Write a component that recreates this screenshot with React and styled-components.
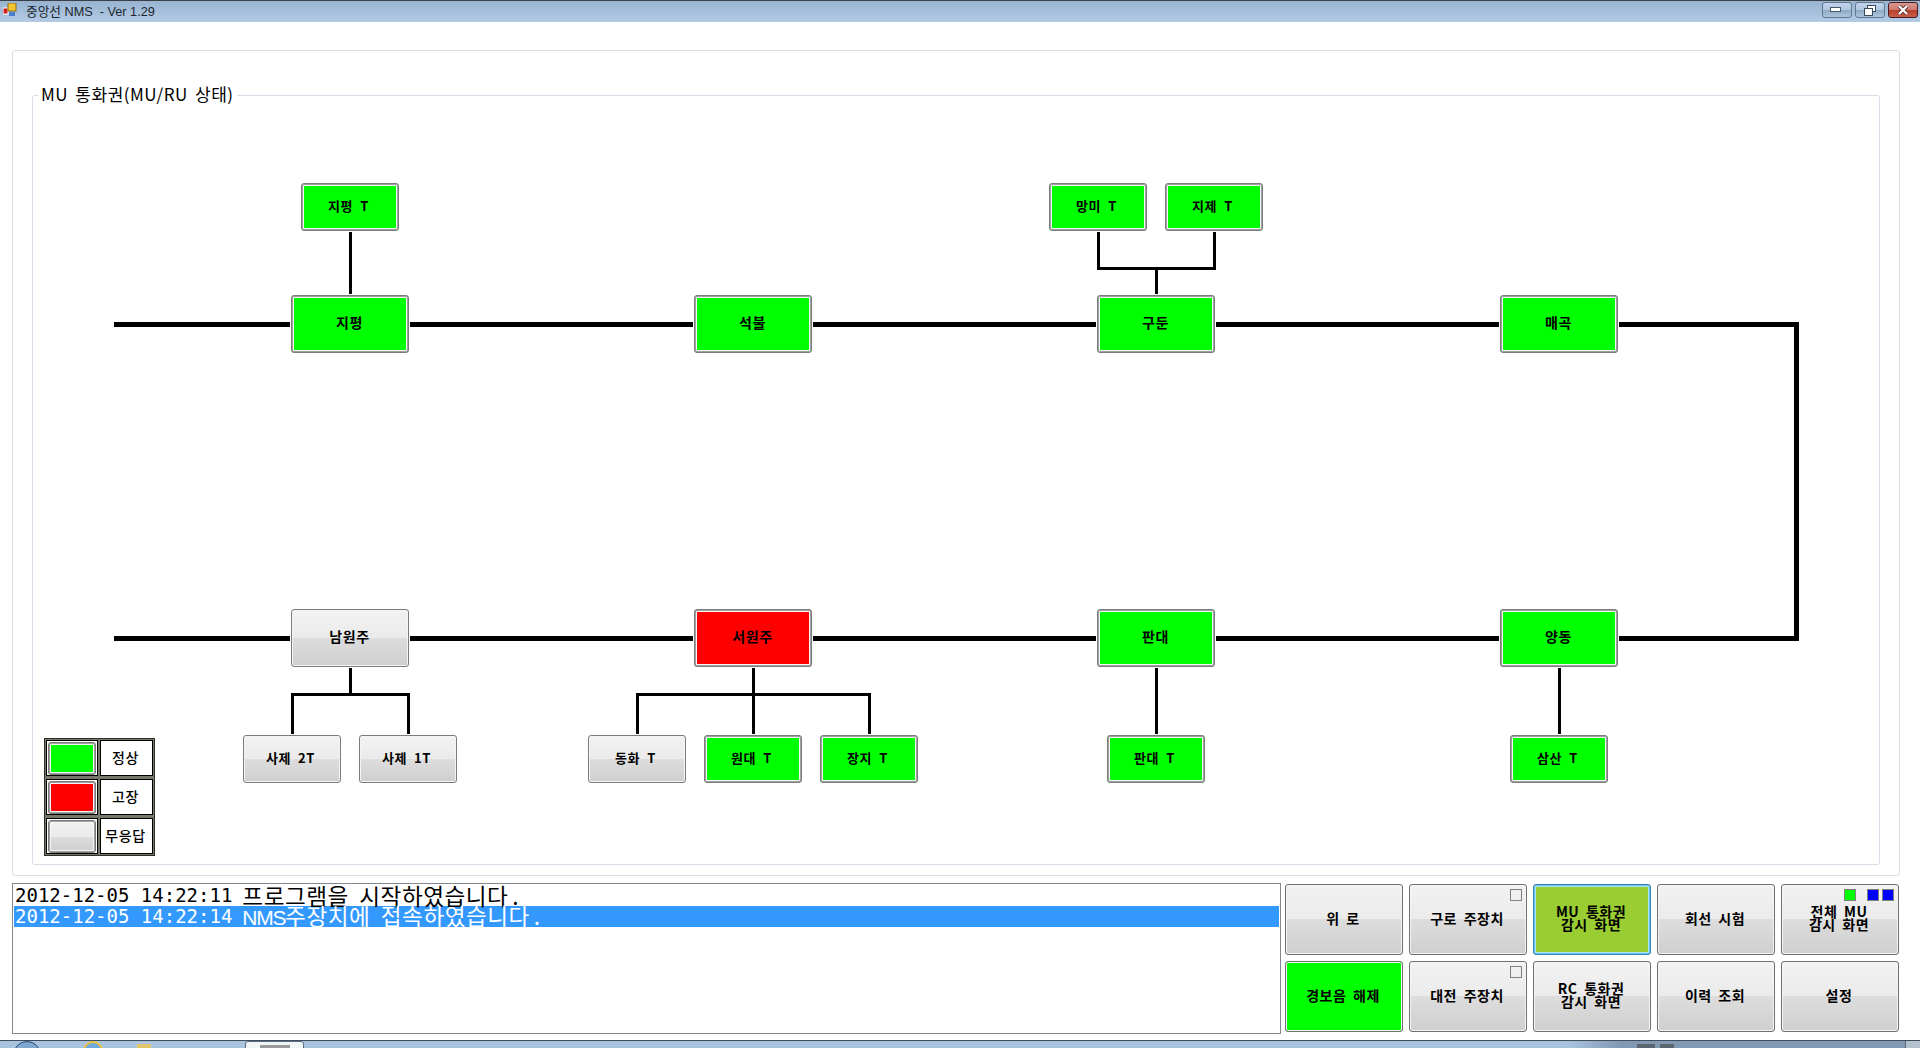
import React from 'react'
import styled, { createGlobalStyle, css } from 'styled-components'

const cjk = '"Noto Sans CJK KR", sans-serif'
const ORIGIN = { x: 33, y: 96 }

const GlobalStyle = createGlobalStyle`
  html, body {
    margin: 0;
    padding: 0;
    background: #fff;
    font-family: ${cjk};
  }
`

const Page = styled.div`
  width: 1920px;
  height: 1048px;
  overflow: hidden;
  display: flex;
  flex-direction: column;
  background: #fff;
`

/* title bar */
const TitleBar = styled.div`
  flex: none;
  height: 22px;
  box-sizing: border-box;
  display: flex;
  align-items: center;
  padding: 0 2px 3px 3px;
  border-top: 1px solid #3b4046;
  background: linear-gradient(#98b4d1, #b3cae4);
`

const TitleText = styled.span`
  margin-left: 9px;
  font: 12.7px "Liberation Sans", ${cjk};
  color: #1c2630;
  white-space: pre;
`

const WindowButtons = styled.div`
  margin-left: auto;
  display: flex;
  gap: 3px;
  align-self: flex-start;
  margin-top: 1px;
`

const WindowButton = styled.div`
  width: 30px;
  height: 16px;
  box-sizing: border-box;
  display: flex;
  align-items: center;
  justify-content: center;
  border: 1px solid #5f7590;
  border-radius: 3px;
  background: linear-gradient(#c0d3e8 0, #b0c7df 50%, #8fa9c4 52%, #aec6df 100%);

  ${props => props.$close && css`
    border-color: #4a1a28;
    background: linear-gradient(#d9988c 0, #cc7a6c 50%, #b8402c 52%, #c9604c 100%);
  `}
`

/* frames */
const OuterPanel = styled.div`
  flex: none;
  height: 826px;
  box-sizing: border-box;
  margin: 28px 20px 0 12px;
  padding: 44px 19px 10px 19px;
  border: 1px solid #d6dfe8;
  border-radius: 3px;
`

const GroupBox = styled.div`
  position: relative;
  box-sizing: border-box;
  height: 100%;
  border: 1px solid #d6dfe8;
  border-radius: 3px;
`

const GroupTitle = styled.span`
  position: absolute;
  left: 5px;
  top: -14px;
  padding: 0 3px;
  background: #fff;
  font: 400 17px/24px ${cjk};
  letter-spacing: 0.5px;
  word-spacing: 3px;
  color: #000;
  white-space: nowrap;
`

const Canvas = styled.div`
  position: relative;
  width: 100%;
  height: 100%;
`

const WireLayer = styled.svg`
  position: absolute;
  left: 0;
  top: 0;
  width: 100%;
  height: 100%;
  fill: none;
  stroke: #000;
`

/* status faces */
const fills = {
  ok: '#00ff00',
  fault: '#ff0000',
  none: 'linear-gradient(#f2f2f2 0, #ebebeb 50%, #dddddd 50%, #cfcfcf 100%)'
}

const Node = styled.div`
  position: absolute;
  left: ${props => props.$x - ORIGIN.x}px;
  top: ${props => props.$y - ORIGIN.y}px;
  width: ${props => (props.$small ? 98 : 118)}px;
  height: ${props => (props.$small ? 48 : 58)}px;
  box-sizing: border-box;
  display: flex;
  align-items: center;
  justify-content: center;
  padding: 0 ${props => (props.$small ? 3 : 1)}px ${props => (props.$small ? 3 : 5)}px 0;
  border: 1px solid #7c7c7c;
  border-radius: 3px;
  background: ${props => fills[props.$status]};
  box-shadow: inset 0 0 0 1px #a0a0a0, inset 0 0 0 2px #f5f5f5;
  font: 700 ${props => (props.$small ? 13 : 14)}px ${cjk};
  letter-spacing: 0.6px;
  word-spacing: 3.5px;
  color: #000;
  ${props => props.$status === 'none' && css`
    box-shadow: inset 0 0 0 1px #f4f4f4;
  `}
`

/* legend */
const Legend = styled.div`
  position: absolute;
  left: ${44 - ORIGIN.x}px;
  top: ${738 - ORIGIN.y}px;
  width: 111px;
  height: 118px;
  box-sizing: border-box;
  display: grid;
  grid-template-columns: 52px 53px;
  grid-auto-rows: 36px;
  column-gap: 2px;
  row-gap: 3px;
  padding: 2px;
  background: #77776a;
  outline: 1px solid #2e2e28;
  outline-offset: -1px;
`

const LegendCell = styled.div`
  box-sizing: border-box;
  display: flex;
  align-items: center;
  justify-content: center;
  border: 1px solid #000;
  background: #fff;
  font: 500 14px ${cjk};
  letter-spacing: 0.6px;
  padding: 0 2px 3px 0;
`

const SwatchCell = styled(LegendCell)`
  padding: 0;
`

const Swatch = styled.div`
  width: 48px;
  height: 33px;
  box-sizing: border-box;
  border: 1px solid #7c7c7c;
  border-radius: 3px;
  background: ${props => fills[props.$status]};
  box-shadow: inset 0 0 0 1px #a0a0a0, inset 0 0 0 2px #f5f5f5;
`

/* bottom */
const BottomRow = styled.div`
  flex: none;
  height: 151px;
  margin: 7px 21px 0 12px;
  display: flex;
  gap: 4px;
`

const LogBox = styled.div`
  width: 1269px;
  box-sizing: border-box;
  padding: 1px;
  border: 1px solid #828790;
`

const LogRow = styled.div`
  height: 21px;
  display: flex;
  align-items: center;
  padding-left: 1px;
  white-space: pre;
  color: #000;
  ${props => props.$selected && css`
    background: #3399ff;
    color: #fff;
  `}
`

const Stamp = styled.span`
  font: 400 19px/21px "DejaVu Sans Mono", monospace;
`

const Message = styled.span`
  font: 400 22.6px/21px ${cjk};
  margin-left: 10px;
  letter-spacing: 0.5px;
  word-spacing: 5px;
`

const Latin = styled.span`
  font: 400 21px/21px "Liberation Sans", sans-serif;
  letter-spacing: -1.3px;
`

const Period = styled.span`
  margin-left: 4px;
`

const ButtonGrid = styled.div`
  margin-top: 1px;
  display: grid;
  grid-template-columns: repeat(5, 118px);
  grid-template-rows: repeat(2, 71px);
  gap: 6px;
`

const CommandButton = styled.button`
  position: relative;
  margin: 0;
  padding: 0 2px 3px 0;
  box-sizing: border-box;
  border: 1px solid #707070;
  border-radius: 3px;
  background: ${props => (props.$fill ? props.$fill : fills.none)};
  box-shadow: inset 0 0 0 1px #f4f4f4;
  font: 700 14px/13px ${cjk};
  letter-spacing: 0.5px;
  word-spacing: 3px;
  color: #000;
  white-space: pre-line;

  ${props => props.$focused && css`
    border-color: #3c7fb1;
    box-shadow: inset 0 0 0 1px #62c8ef, inset 0 0 0 2px #a7e2f9;
  `}
`

const Lamps = styled.div`
  position: absolute;
  top: 4px;
  right: 4px;
  display: flex;
`

const Lamp = styled.span`
  width: 12px;
  height: 12px;
  box-sizing: border-box;
  margin-left: ${props => props.$gap || 0}px;
  border: 1px solid #808080;
  background: ${props => props.$color || 'transparent'};
`

/* taskbar */
const TaskBar = styled.div`
  flex: none;
  height: 8px;
  box-sizing: border-box;
  margin-top: 6px;
  display: flex;
  overflow: hidden;
  border-top: 1px solid #3f4d5c;
  background: linear-gradient(90deg, #a9c3df 0, #a9c3df 1568px, #8299b4 1620px, #8299b4 100%);
`

const StartOrb = styled.div`
  flex: none;
  width: 28px;
  height: 28px;
  box-sizing: border-box;
  margin-left: 13px;
  border: 1px solid #274b74;
  border-radius: 50%;
  background: #7fa7cf;
`

const IeMark = styled.div`
  flex: none;
  width: 20px;
  height: 20px;
  box-sizing: border-box;
  margin-left: 42px;
  border: 2px solid #e8c33a;
  border-radius: 50%;
  background: #6fa8dc;
`

const FolderMark = styled.div`
  flex: none;
  width: 14px;
  height: 12px;
  margin: 3px 0 0 34px;
  background: #e2c46a;
`

const ActiveTask = styled.div`
  flex: none;
  width: 59px;
  height: 12px;
  box-sizing: border-box;
  margin-left: 94px;
  display: flex;
  justify-content: center;
  padding-top: 3px;
  border: 1px solid #5a6c80;
  border-radius: 3px 3px 0 0;
  background: #f2f5f8;
`

const TaskThumb = styled.div`
  width: 30px;
  height: 8px;
  background: #9a9a9a;
`

const TrayMarks = styled.div`
  flex: none;
  margin-left: 1333px;
  display: flex;
  gap: 5px;
  padding-top: 3px;
`

const TrayMark = styled.div`
  width: ${props => props.$width}px;
  height: 8px;
  background: #5c6670;
`

const ShowDesktop = styled.div`
  flex: none;
  width: 14px;
  margin-left: auto;
  background: #b4c2d0;
  border-left: 1px solid #5c6670;
`

const AppIcon = () => (
  <svg width="14" height="14" viewBox="0 0 14 14">
    <rect x="0" y="5" width="5" height="6" fill="#d02020" stroke="#fff" />
    <rect x="5" y="0" width="8" height="8" fill="#f4c430" stroke="#8a6d10" />
    <rect x="6" y="9" width="6" height="4" fill="#4a7fd0" />
  </svg>
)

const wires = {
  main: [
    'M114 324.5H290', 'M410 324.5H693', 'M813 324.5H1096', 'M1216 324.5H1499',
    'M1619 324.5H1796.5V638.5H1619',
    'M114 638.5H290', 'M410 638.5H693', 'M813 638.5H1096', 'M1216 638.5H1499'
  ],
  branch: [
    'M350.5 232V294',
    'M1098.5 232V268.5H1214.5V232', 'M1156.5 268V294',
    'M292.5 734V694.5H408.5V734', 'M350.5 668V694',
    'M637.5 734V694.5H869.5V734', 'M753.5 668V734',
    'M1156.5 668V734',
    'M1559.5 668V734'
  ]
}

const stations = [
  { name: '지평', x: 291, y: 295, status: 'ok' },
  { name: '석불', x: 694, y: 295, status: 'ok' },
  { name: '구둔', x: 1097, y: 295, status: 'ok' },
  { name: '매곡', x: 1500, y: 295, status: 'ok' },
  { name: '남원주', x: 291, y: 609, status: 'none' },
  { name: '서원주', x: 694, y: 609, status: 'fault' },
  { name: '판대', x: 1097, y: 609, status: 'ok' },
  { name: '양동', x: 1500, y: 609, status: 'ok' }
]

const tunnels = [
  { name: '지평 T', x: 301, y: 183, status: 'ok' },
  { name: '망미 T', x: 1049, y: 183, status: 'ok' },
  { name: '지제 T', x: 1165, y: 183, status: 'ok' },
  { name: '사제 2T', x: 243, y: 735, status: 'none' },
  { name: '사제 1T', x: 359, y: 735, status: 'none' },
  { name: '동화 T', x: 588, y: 735, status: 'none' },
  { name: '원대 T', x: 704, y: 735, status: 'ok' },
  { name: '장지 T', x: 820, y: 735, status: 'ok' },
  { name: '판대 T', x: 1107, y: 735, status: 'ok' },
  { name: '삼산 T', x: 1510, y: 735, status: 'ok' }
]

const legend = [
  { label: '정상', status: 'ok' },
  { label: '고장', status: 'fault' },
  { label: '무응답', status: 'none' }
]

const App = () => (
  <Page>
    <GlobalStyle />
    <TitleBar>
      <AppIcon />
      <TitleText>중앙선 NMS  - Ver 1.29</TitleText>
      <WindowButtons>
        <WindowButton>
          <svg width="14" height="6" viewBox="0 0 14 6">
            <rect x="0.5" y="0.5" width="10" height="4" fill="#fff" stroke="#44586e" />
          </svg>
        </WindowButton>
        <WindowButton>
          <svg width="12" height="11" viewBox="0 0 12 11" fill="#fff" stroke="#3a4c60">
            <rect x="3.5" y="0.5" width="8" height="6" />
            <rect x="0.5" y="3.5" width="8" height="7" />
          </svg>
        </WindowButton>
        <WindowButton $close>
          <svg width="12" height="10" viewBox="0 0 12 10">
            <path d="M2 1L10 9M10 1L2 9" stroke="#5a2a2a" strokeWidth="4" />
            <path d="M2 1L10 9M10 1L2 9" stroke="#fff" strokeWidth="2.4" />
          </svg>
        </WindowButton>
      </WindowButtons>
    </TitleBar>

    <OuterPanel>
      <GroupBox>
        <GroupTitle>MU 통화권(MU/RU 상태)</GroupTitle>
        <Canvas>
          <WireLayer viewBox={`${ORIGIN.x} ${ORIGIN.y} 1846 768`} shapeRendering="crispEdges">
            {wires.main.map(d => <path key={d} d={d} strokeWidth="5" />)}
            {wires.branch.map(d => <path key={d} d={d} strokeWidth="3" />)}
          </WireLayer>
          {stations.map(s => <Node key={s.name} $x={s.x} $y={s.y} $status={s.status}>{s.name}</Node>)}
          {tunnels.map(t => <Node key={t.name} $small $x={t.x} $y={t.y} $status={t.status}>{t.name}</Node>)}
          <Legend>
            {legend.map(item => (
              <React.Fragment key={item.label}>
                <SwatchCell><Swatch $status={item.status} /></SwatchCell>
                <LegendCell>{item.label}</LegendCell>
              </React.Fragment>
            ))}
          </Legend>
        </Canvas>
      </GroupBox>
    </OuterPanel>

    <BottomRow>
      <LogBox>
        <LogRow>
          <Stamp>2012-12-05 14:22:11</Stamp>
          <Message>프로그램을 시작하였습니다<Period>.</Period></Message>
        </LogRow>
        <LogRow $selected>
          <Stamp>2012-12-05 14:22:14</Stamp>
          <Message><Latin>NMS</Latin>주장치에 접속하였습니다<Period>.</Period></Message>
        </LogRow>
      </LogBox>
      <ButtonGrid>
        <CommandButton>위 로</CommandButton>
        <CommandButton>
          구로 주장치
          <Lamps><Lamp /></Lamps>
        </CommandButton>
        <CommandButton $focused $fill="#9acd32">{'MU 통화권\n감시 화면'}</CommandButton>
        <CommandButton>회선 시험</CommandButton>
        <CommandButton>
          {'전체 MU\n감시 화면'}
          <Lamps>
            <Lamp $color="#00ff00" />
            <Lamp $color="#0000ff" $gap={11} />
            <Lamp $color="#0000ff" $gap={3} />
          </Lamps>
        </CommandButton>
        <CommandButton $fill="#00ff00">경보음 해제</CommandButton>
        <CommandButton>
          대전 주장치
          <Lamps><Lamp /></Lamps>
        </CommandButton>
        <CommandButton>{'RC 통화권\n감시 화면'}</CommandButton>
        <CommandButton>이력 조회</CommandButton>
        <CommandButton>설정</CommandButton>
      </ButtonGrid>
    </BottomRow>

    <TaskBar>
      <StartOrb />
      <IeMark />
      <FolderMark />
      <ActiveTask><TaskThumb /></ActiveTask>
      <TrayMarks>
        <TrayMark $width={18} />
        <TrayMark $width={14} />
      </TrayMarks>
      <ShowDesktop />
    </TaskBar>
  </Page>
)

export default App
